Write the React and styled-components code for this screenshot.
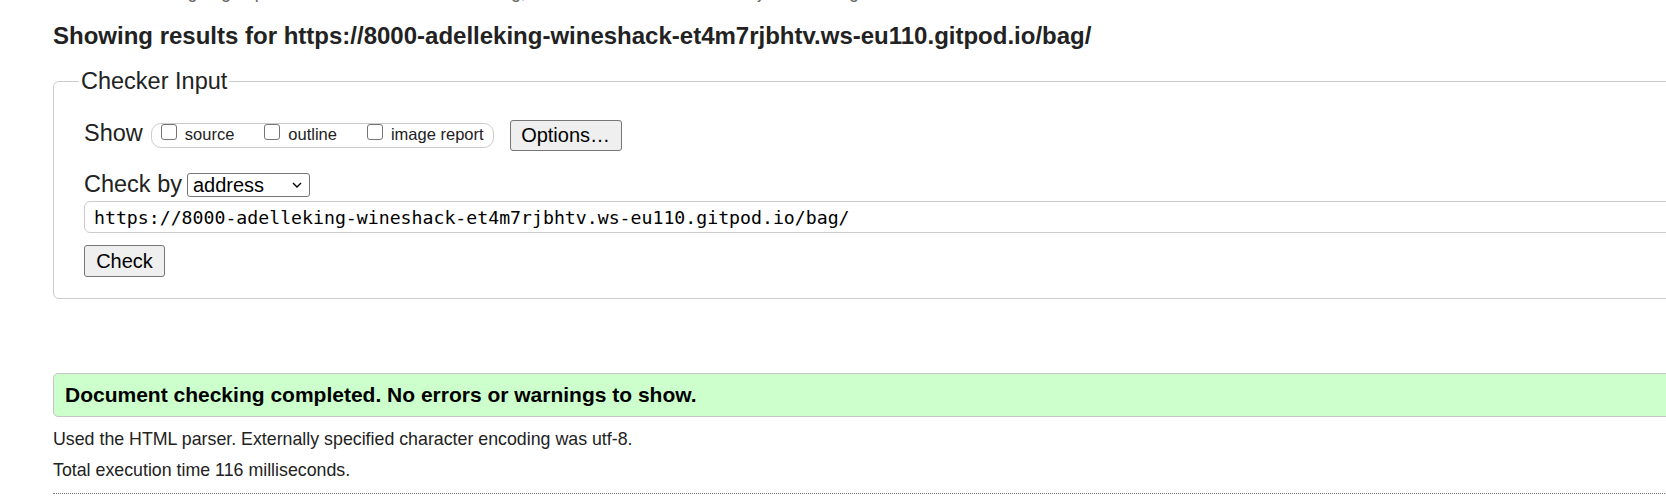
import styled, { createGlobalStyle } from "styled-components";

const GlobalStyle = createGlobalStyle`
  html, body {
    margin: 0;
    padding: 0;
    overflow: hidden;
    background: #ffffff;
  }
  body {
    font-family: "Liberation Sans", Arial, sans-serif;
    color: #222222;
  }
`;

const Page = styled.div`
  width: 1760px;
  padding-left: 53px;
`;

const Intro = styled.p`
  margin: -19px 0 0;
  font-size: 17.8px;
  line-height: 22px;
  color: #666666;
  white-space: nowrap;
`;

const Title = styled.h2`
  margin: 19px 0 0;
  font-size: 24px;
  line-height: 28px;
  font-weight: bold;
  color: #222222;
  white-space: nowrap;
`;

const Fieldset = styled.fieldset`
  margin: 17px 0 0;
  padding: 24px 0 21px 30px;
  border: 1px solid #cccccc;
  border-radius: 6px;
  min-width: 0;
`;

const Legend = styled.legend`
  margin-left: -5px;
  padding: 0 2px;
  font-size: 23.5px;
  line-height: 28px;
  color: #222222;
`;

const Row = styled.div`
  display: flex;
  align-items: flex-start;
  margin-top: ${(p) => p.$gap || 0}px;
`;

const Label = styled.span`
  font-size: 23.5px;
  line-height: 28px;
  white-space: nowrap;
`;

const ShowGroup = styled.div`
  display: flex;
  align-items: flex-start;
  box-sizing: border-box;
  height: 25px;
  margin: 4px 0 0 8px;
  padding: 0 9px;
  border: 1px solid #cccccc;
  border-radius: 10px;
`;

const Option = styled.label`
  display: flex;
  align-items: baseline;
  margin-right: ${(p) => (p.$last ? 0 : 30)}px;
  font-size: 16.5px;
  line-height: 20px;
  white-space: nowrap;
`;

const Box = styled.input`
  appearance: none;
  box-sizing: border-box;
  width: 16px;
  height: 16px;
  margin: 0 8px 3px 0;
  border: 1px solid #767676;
  border-radius: 3px;
  background: #ffffff;
`;

const Button = styled.button`
  box-sizing: border-box;
  width: ${(p) => p.$w}px;
  height: ${(p) => p.$h}px;
  margin: ${(p) => p.$m || "0"};
  padding: 0;
  font-family: "Liberation Sans", Arial, sans-serif;
  font-size: 20px;
  color: #000000;
  background: #efefef;
  border: 1px solid #767676;
  border-radius: 3px;
`;

const SelectWrap = styled.div`
  position: relative;
  margin: 3px 0 0 5px;
`;

const Select = styled.select`
  appearance: none;
  box-sizing: border-box;
  width: 123px;
  height: 24px;
  padding: 0 0 0 5px;
  font-family: "Liberation Sans", Arial, sans-serif;
  font-size: 20px;
  color: #000000;
  background: #ffffff;
  border: 1px solid #767676;
  border-radius: 3px;
`;

const Chevron = styled.svg`
  position: absolute;
  right: 8px;
  top: 9px;
  pointer-events: none;
`;

const UrlInput = styled.input`
  box-sizing: border-box;
  width: 100%;
  height: 32px;
  margin-top: 3px;
  padding: 0 9px;
  font-family: "DejaVu Sans Mono", "Liberation Mono", monospace;
  font-size: 18.2px;
  color: #000000;
  border: 1px solid #cccccc;
  border-radius: 6px;
  outline: none;
`;

const Success = styled.div`
  display: flex;
  align-items: center;
  box-sizing: border-box;
  height: 44px;
  margin-top: 74px;
  padding-left: 11px;
  font-size: 21px;
  font-weight: bold;
  color: #000000;
  background: #ccffcc;
  border: 1px solid #c4c4c4;
  border-radius: 5px;
  white-space: nowrap;
`;

const Info = styled.p`
  margin: ${(p) => p.$top || 0}px 0 0;
  font-size: 17.8px;
  line-height: 31px;
  color: #222222;
  white-space: nowrap;
`;

const Rule = styled.hr`
  margin: 7px 0 0;
  border: 0;
  border-top: 1px dotted #777777;
  height: 0;
`;

const url = "https://8000-adelleking-wineshack-et4m7rjbhtv.ws-eu110.gitpod.io/bag/";

export default function App() {
  return (
    <>
      <GlobalStyle />
      <Page>
        <Intro>
          This tool is an ongoing experiment in better HTML checking, and its behavior remains subject to change
        </Intro>
        <Title>Showing results for {url}</Title>
        <Fieldset>
          <Legend>Checker Input</Legend>
          <Row>
            <Label>Show</Label>
            <ShowGroup>
              <Option>
                <Box type="checkbox" />
                source
              </Option>
              <Option>
                <Box type="checkbox" />
                outline
              </Option>
              <Option $last>
                <Box type="checkbox" />
                image report
              </Option>
            </ShowGroup>
            <Button type="button" $w={112} $h={31} $m="1px 0 0 16px">
              Options…
            </Button>
          </Row>
          <Row $gap={19}>
            <Label>Check by</Label>
            <SelectWrap>
              <Select defaultValue="address">
                <option value="address">address</option>
                <option value="file">file upload</option>
                <option value="text">text input</option>
              </Select>
              <Chevron width="10" height="6" viewBox="0 0 10 6">
                <path d="M1 1 L5 5 L9 1" fill="none" stroke="#000" strokeWidth="1.4" />
              </Chevron>
            </SelectWrap>
          </Row>
          <UrlInput type="url" defaultValue={url} />
          <Row $gap={12}>
            <Button type="button" $w={81} $h={32}>
              Check
            </Button>
          </Row>
        </Fieldset>
        <Success>Document checking completed. No errors or warnings to show.</Success>
        <Info $top={7}>Used the HTML parser. Externally specified character encoding was utf-8.</Info>
        <Info>Total execution time 116 milliseconds.</Info>
        <Rule />
      </Page>
    </>
  );
}
